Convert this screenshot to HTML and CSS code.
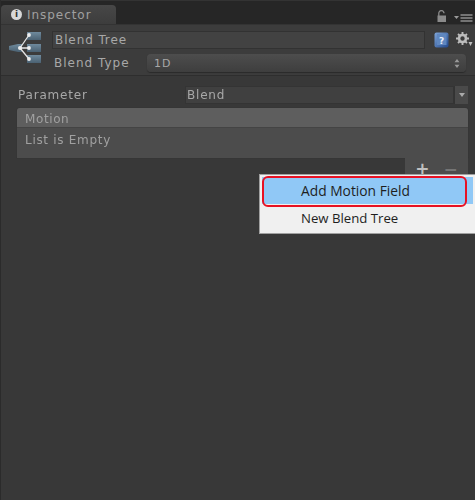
FILE: index.html
```html
<!DOCTYPE html>
<html>
<head>
<meta charset="utf-8">
<title>Inspector</title>
<link rel="stylesheet" href="styles.css">
</head>
<body>
<div class="window">
  <div class="tabbar">
    <div class="tab">
      <span class="info-icon">i</span>
      <span class="tab-label">Inspector</span>
    </div>
    <div class="tab-tools">
      <svg class="lock" width="10" height="12" viewBox="0 0 10 12"><path d="M1.800 6V3.200a2.600 2.600 0 0 1 5.200 0" fill="none" stroke="#8a8a8a" stroke-width="1.300"/><rect x="0.500" y="5.500" width="8.500" height="6.500" fill="#8a8a8a"/></svg>
      <svg class="menu" width="19" height="8" viewBox="0 0 19 8"><path d="M0 2h5L2.500 5z" fill="#9a9a9a"/><path d="M6.500 1h12M6.500 4h12M6.500 7h12" stroke="#8f8f8f" stroke-width="1.500"/></svg>
    </div>
  </div>
  <div class="header">
    <svg class="tree-icon" width="34" height="34" viewBox="0 0 34 34">
      <defs><linearGradient id="box" x1="0" y1="0" x2="0" y2="1"><stop offset="0" stop-color="#6f8a9d"/><stop offset="1" stop-color="#4a6172"/></linearGradient></defs>
      <rect x="18" y="1" width="14" height="8" fill="url(#box)"/>
      <rect x="18" y="13" width="14" height="8" fill="url(#box)"/>
      <rect x="18" y="24" width="14" height="8" fill="url(#box)"/>
      <path d="M0 15L9 13H13V21H9L0 19z" fill="url(#box)"/>
      <path d="M11 17L20 4M11 17H20M11 17L20 28" stroke="#e4e4e4" stroke-width="1.300" fill="none"/>
      <circle cx="20" cy="4" r="1.900" fill="#eee"/><circle cx="20" cy="17" r="1.900" fill="#eee"/><circle cx="20" cy="28" r="1.900" fill="#eee"/><circle cx="11" cy="17" r="2" fill="#eee"/>
    </svg>
    <div class="header-fields">
      <div class="name-row">
        <div class="name-field">Blend Tree</div>
        <svg class="help" width="15" height="16" viewBox="0 0 15 16"><defs><linearGradient id="hb" x1="0" y1="0" x2="1" y2="1"><stop offset="0" stop-color="#7ea5d8"/><stop offset="1" stop-color="#22488c"/></linearGradient></defs><rect x="0.500" y="0.500" width="14" height="15" rx="2" fill="url(#hb)"/><rect x="3" y="2" width="9.500" height="11" fill="#5f87bf"/><text x="7.700" y="11.500" class="help-q">?</text></svg>
        <svg class="gear" width="17" height="16" viewBox="0 0 17 16"><circle cx="6.500" cy="6.500" r="3.500" fill="none" stroke="#bdbdbd" stroke-width="2.600"/><path d="M6.500 0v2.500M6.500 10.500V13M0 6.500h2.500M10.500 6.500H13M2 2l1.700 1.700M9.300 9.300L11 11M2 11l1.700-1.700M9.300 3.700L11 2" stroke="#bdbdbd" stroke-width="1.900"/><path d="M12.500 10h4L14.500 14z" fill="#bdbdbd"/></svg>
      </div>
      <div class="type-row">
        <span class="type-label">Blend Type</span>
        <div class="select">
          <span>1D</span>
          <svg width="6" height="9" viewBox="0 0 6 9"><path d="M3 0l2.500 3.200H.5zM3 9l2.500-3.200H.5z" fill="#999"/></svg>
        </div>
      </div>
    </div>
  </div>
  <div class="content">
    <div class="param-row">
      <span class="param-label">Parameter</span>
      <div class="param-field">Blend</div>
      <div class="param-arrow"><svg width="6" height="4" viewBox="0 0 6 4"><path d="M0 0h6L3 4z" fill="#aaa"/></svg></div>
    </div>
    <div class="list">
      <div class="list-head">Motion</div>
      <div class="list-body">List is Empty</div>
    </div>
    <div class="list-foot">
      <div class="foot-buttons"><span class="plus">+</span><span class="minus">−</span></div>
    </div>
  </div>
  <div class="popup">
    <div class="popup-item active"><div class="active-ring">Add Motion Field</div></div>
    <div class="popup-item second">New Blend Tree</div>
  </div>
</div>
</body>
</html>
```
FILE: styles.css
```css
html, body {
  margin: 0;
  padding: 0;
}
body {
  width: 475px;
  height: 500px;
  overflow: hidden;
  background: #383838;
  font-family: "DejaVu Sans", sans-serif;
  font-size: 12px;
  color: #a8a8a8;
}
.window {
  position: relative;
  width: 475px;
  height: 500px;
  box-sizing: border-box;
  border-left: 1px solid #2b2b2b;
  overflow: hidden;
  filter: blur(0.4px);
}
.tabbar {
  height: 24px;
  box-sizing: border-box;
  padding-top: 4px;
  background: #262626;
  border-top: 1px solid #333;
  display: flex;
  justify-content: space-between;
  align-items: stretch;
}
.tab {
  width: 115px;
  box-sizing: border-box;
  background: linear-gradient(#474747, #3d3d3d);
  border-radius: 4px 4px 0 0;
  display: flex;
  align-items: center;
  gap: 5px;
  padding-left: 10px;
  letter-spacing: 0.95px;
  color: #a0a0a0;
}
.info-icon {
  width: 11px;
  height: 11px;
  border-radius: 50%;
  background: #d8d8d8;
  color: #333;
  font-size: 9px;
  font-weight: bold;
  line-height: 11px;
  text-align: center;
  letter-spacing: 0;
}
.tab-tools {
  display: flex;
  align-items: flex-end;
  gap: 7px;
  padding: 0 2px 2px 0;
}
.header {
  height: 52px;
  box-sizing: border-box;
  background: #3c3c3c;
  border-top: 1px solid #333;
  border-bottom: 1px solid #2e2e2e;
  display: flex;
  padding: 6px 0 0 8px;
  gap: 9px;
}
.tree-icon {
  flex: none;
}
.header-fields {
  flex: 1;
  display: flex;
  flex-direction: column;
  gap: 5px;
}
.name-row {
  display: flex;
  align-items: center;
  height: 18px;
}
.name-field {
  width: 373px;
  height: 18px;
  box-sizing: border-box;
  background: #424242;
  border: 1px solid #323232;
  padding-left: 2px;
  line-height: 16px;
  letter-spacing: 0.9px;
  flex: none;
}
.help {
  margin-left: 9px;
  flex: none;
}
.help-q {
  font-size: 9px;
  font-weight: bold;
  fill: #e8eef8;
  text-anchor: middle;
}
.gear {
  margin-left: 7px;
  flex: none;
}
.type-row {
  display: flex;
  align-items: center;
  height: 18px;
}
.type-label {
  width: 95px;
  padding-left: 2px;
  box-sizing: border-box;
  letter-spacing: 1px;
  flex: none;
}
.select {
  width: 319px;
  height: 18px;
  box-sizing: border-box;
  background: linear-gradient(#4d4d4d, #3e3e3e);
  border-radius: 4px;
  box-shadow: 0 1px 1px #2a2a2a;
  display: flex;
  justify-content: space-between;
  align-items: center;
  padding: 0 6px 0 7px;
  font-size: 11px;
  letter-spacing: 1px;
}
.content {
  padding: 9px 7px 0 16px;
}
.param-row {
  display: flex;
  align-items: center;
  height: 18px;
  padding-top: 1px;
}
.param-label {
  width: 167px;
  flex: none;
  padding-left: 1px;
  letter-spacing: 0.8px;
}
.param-field {
  flex: 1;
  height: 18px;
  box-sizing: border-box;
  background: #404040;
  border: 1px solid #343434;
  padding-left: 1px;
  line-height: 16px;
  letter-spacing: 0.8px;
}
.param-arrow {
  width: 14px;
  height: 18px;
  box-sizing: border-box;
  background: #4a4a4a;
  border-left: 1px solid #333;
  display: flex;
  align-items: center;
  justify-content: center;
}
.list {
  margin-top: 4px;
  border-radius: 3px 3px 0 0;
  background: #4c4c4c;
  box-shadow: 0 0 1px #2a2a2a;
  overflow: hidden;
}
.list-head {
  height: 20px;
  box-sizing: border-box;
  background: #5e5e5e;
  border-bottom: 1px solid #444;
  padding-left: 8px;
  line-height: 22px;
  letter-spacing: 0.6px;
  color: #a0a0a0;
}
.list-body {
  height: 30px;
  padding: 4px 0 0 8px;
  box-sizing: border-box;
  line-height: 16px;
  letter-spacing: 0.7px;
  color: #a0a0a0;
}
.list-foot {
  display: flex;
  justify-content: flex-end;
}
.foot-buttons {
  width: 63px;
  height: 22px;
  background: #4c4c4c;
  display: flex;
  gap: 14px;
  justify-content: center;
  align-items: flex-start;
  font-size: 17px;
  font-weight: bold;
  line-height: 22px;
  color: #c0c0c0;
}
.minus {
  color: #757575;
}
.popup {
  position: absolute;
  left: 258px;
  top: 174px;
  width: 216px;
  height: 60px;
  box-sizing: border-box;
  background: #f0f0f0;
  border: 1px solid #a0a0a0;
  border-right: none;
  padding: 2px;
  font-family: "Open Sans", "Noto Sans", sans-serif;
  font-size: 13.8px;
  color: #1e1e1e;
}
.popup-item {
  height: 27px;
  line-height: 25px;
  padding-left: 39px;
}
.popup-item.second {
  font-size: 13.2px;
}
.popup-item.active {
  background: linear-gradient(#90c8f6, #90c8f6) no-repeat 0 1px / 100% 27px;
  height: 31px;
  margin: -1px 0 -1px;
  padding: 0;
}
.active-ring {
  width: 205px;
  height: 31px;
  box-sizing: border-box;
  border: 2px solid #e81123;
  border-radius: 6px;
  line-height: 25px;
  padding-left: 37px;
}
```
